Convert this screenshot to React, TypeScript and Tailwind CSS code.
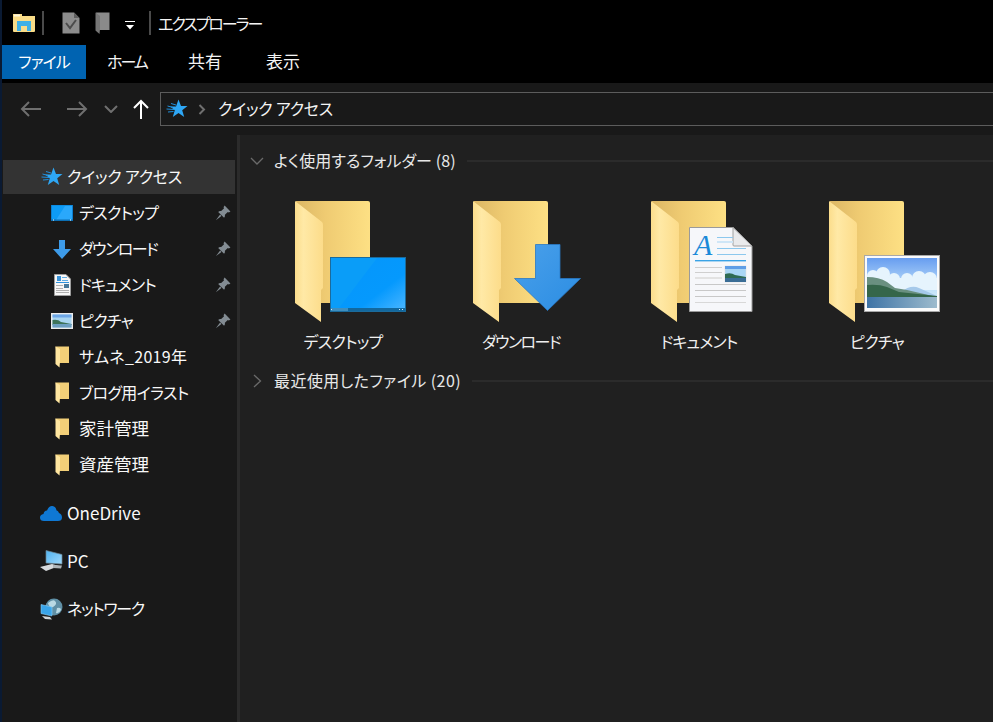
import React from 'react';

const jp = "font-['Noto_Sans_CJK_JP','Noto_Sans',sans-serif] [font-feature-settings:'palt']";

// kana in the original font run narrower than Noto, so each label gets its own fit
const fit: Record<string, string> = {
  デスクトップ: 'tracking-[-0.7px]',
  ダウンロード: 'tracking-[-1.5px]',
  ドキュメント: 'tracking-[-0.8px]',
  ピクチャ: 'tracking-[-0.7px]',
  'サムネ_2019年': 'tracking-[0.3px]',
  ブログ用イラスト: 'tracking-[-0.6px]',
  家計管理: 'text-[17.5px]',
  資産管理: 'text-[17.5px]',
};

function Defs() {
  return (
    <svg className="w-0 h-0 shrink-0" aria-hidden="true">
      <defs>
        <linearGradient id="folderBack" x1="0" y1="0" x2="1" y2="0">
          <stop offset="0" stopColor="#dcb765" />
          <stop offset="0.4" stopColor="#efcb72" />
          <stop offset="1" stopColor="#fde084" />
        </linearGradient>
        <linearGradient id="folderFront" x1="0" y1="0" x2="1" y2="0">
          <stop offset="0" stopColor="#fbdd8c" />
          <stop offset="0.3" stopColor="#ffe9a6" />
          <stop offset="1" stopColor="#fcdc8a" />
        </linearGradient>
        <linearGradient id="arrowBlue" x1="0" y1="0" x2="1" y2="1">
          <stop offset="0" stopColor="#4aa0ea" />
          <stop offset="1" stopColor="#2b8de3" />
        </linearGradient>
        <linearGradient id="sky" x1="0" y1="0" x2="0" y2="1">
          <stop offset="0" stopColor="#679df0" />
          <stop offset="0.6" stopColor="#bfe0fa" />
          <stop offset="1" stopColor="#e6f5fb" />
        </linearGradient>
        <linearGradient id="water" x1="0" y1="0" x2="1" y2="0">
          <stop offset="0" stopColor="#3f74a6" />
          <stop offset="1" stopColor="#9dbbcd" />
        </linearGradient>
        <linearGradient id="screen" x1="0" y1="0" x2="1" y2="1">
          <stop offset="0" stopColor="#0596fb" />
          <stop offset="0.65" stopColor="#0599fd" />
          <stop offset="1" stopColor="#46b4ff" />
        </linearGradient>
        <linearGradient id="pcScreen" x1="0" y1="0" x2="1" y2="1">
          <stop offset="0" stopColor="#4fb2f0" />
          <stop offset="1" stopColor="#9fd8fb" />
        </linearGradient>
      </defs>
    </svg>
  );
}

function BigFolder() {
  return (
    <>
      <path d="M1 1H73Q75 1 75 3V103H20L1 40Z" fill="url(#folderBack)" />
      <path d="M0 1L27 22Q28 23 28 25V88L26 90V122L0 103Z" fill="url(#folderFront)" />
    </>
  );
}

function DesktopOverlay() {
  return (
    <g>
      <rect x="35.5" y="57.5" width="75" height="54" fill="#0a9df8" stroke="#1b6b9c" />
      <path d="M44 108L82 58H110V108Z" fill="url(#screen)" />
      <rect x="36" y="108" width="74" height="3" fill="#12689e" />
      <rect x="36" y="108" width="17" height="3" fill="#3f8fbf" />
      <rect x="104" y="109" width="1" height="1" fill="#d5eefb" />
      <rect x="107" y="109" width="1" height="1" fill="#d5eefb" />
      <rect x="36" y="109" width="1" height="1" fill="#d5eefb" />
    </g>
  );
}

function DownloadOverlay() {
  return <path d="M62.5 44.5H87V78.5H107.5L74.5 110.5L41.5 78.5H62.5Z" fill="url(#arrowBlue)" stroke="#2a79c4" strokeWidth="0.8" />;
}

function DocumentOverlay() {
  return (
    <g>
      <path d="M38.5 27.5H82L101 46V111.5H38.5Z" fill="#f6f7fa" stroke="#9a9a9a" />
      <path d="M82 27.5V45Q82 46 83 46H101Z" fill="#e9eaec" stroke="#a0a0a0" />
      <text x="43" y="55" fontFamily="Liberation Serif" fontStyle="italic" fontSize="30" fill="#1b8ad8">A</text>
      <rect x="66" y="37" width="16" height="1" fill="#8cc8ee" />
      <rect x="66" y="41" width="16" height="2" fill="#cfe6f7" />
      <rect x="66" y="48" width="29" height="1" fill="#8cc8ee" />
      <rect x="66" y="54" width="29" height="1" fill="#8cc8ee" />
      <rect x="44" y="60" width="51" height="1.4" fill="#3aa3e6" />
      <rect x="44" y="67" width="27" height="1" fill="#cfcfcf" />
      <rect x="44" y="72" width="27" height="1" fill="#cfcfcf" />
      <rect x="44" y="77" width="27" height="2" fill="#e2e2e2" />
      <rect x="44" y="84" width="51" height="1" fill="#c8c8c8" />
      <rect x="44" y="90" width="51" height="1" fill="#c8c8c8" />
      <rect x="44" y="96" width="51" height="1" fill="#c8c8c8" />
      <rect x="44" y="102" width="51" height="1" fill="#d8d8d8" />
      <rect x="74" y="66" width="21" height="16" fill="#a9d6f5" stroke="#dcdcdc" strokeWidth="0.5" />
      <rect x="74" y="66" width="21" height="3" fill="#5f9ee6" />
      <path d="M74 74Q80 72 84 75L95 77V78H74Z" fill="#2f6b53" />
      <rect x="74" y="78" width="21" height="4" fill="#3a6d96" />
    </g>
  );
}

function PictureOverlay() {
  return (
    <g>
      <rect x="35.5" y="55.5" width="75" height="56" fill="#fafafa" stroke="#a8a8a8" />
      <rect x="38" y="58" width="70" height="50" fill="url(#sky)" />
      <g fill="#e6f4fd">
        <circle cx="44" cy="76" r="6" />
        <circle cx="54" cy="74" r="7" />
        <circle cx="65" cy="79" r="6" />
        <circle cx="78" cy="79" r="6" />
        <circle cx="90" cy="78" r="7" />
        <circle cx="101" cy="79" r="7" />
        <rect x="38" y="78" width="70" height="12" />
      </g>
      <path d="M72 92Q82 84 90 88L108 96H70Z" fill="#a5c9ea" />
      <path d="M38 77Q50 77 58 82L66 88L78 90L108 97H38Z" fill="#6a9080" />
      <path d="M38 85Q50 84 58 87L70 92L108 96V98H38Z" fill="#35664a" />
      <rect x="38" y="97" width="70" height="11" fill="url(#water)" />
    </g>
  );
}

const tiles = [
  { name: 'デスクトップ', overlay: <DesktopOverlay /> },
  { name: 'ダウンロード', overlay: <DownloadOverlay /> },
  { name: 'ドキュメント', overlay: <DocumentOverlay /> },
  { name: 'ピクチャ', overlay: <PictureOverlay /> },
];

function StarIcon({ size = 22 }: { size?: number }) {
  return (
    <svg width={size} height={size} viewBox="0 0 22 22">
      <path d="M12.5 1.5L15 8H21.5L16.2 12.2L18.2 19L12.5 15L6.8 19L8.8 12.2L4 8.4H10Z" fill="#2ea7f5" />
      <path d="M5 5.5L10 7M1.5 8L7 9.5M0.5 11L8 11.5M2 14L7.5 13.5" stroke="#1f8fdc" strokeWidth="1" />
    </svg>
  );
}

function SmallFolder() {
  return (
    <svg width="14" height="22" viewBox="0 0 14 22">
      <path d="M0.5 0.5H14V17H3Z" fill="#f2cf78" />
      <path d="M0.5 0.5L5 3V15.5L4.5 21.5L0.5 18Z" fill="#ffe6a0" />
    </svg>
  );
}

function SmallDesktop() {
  return (
    <svg width="22" height="16" viewBox="0 0 22 16">
      <rect width="22" height="16" fill="#0c7fd1" />
      <rect x="1" y="0.5" width="20" height="14" fill="#0d9bf6" />
      <path d="M5 15L14 1H21V15Z" fill="#2aa8fb" />
      <rect x="0" y="14.5" width="22" height="1.5" fill="#0b6fb4" />
      <rect x="2" y="14.5" width="1" height="1" fill="#fff" />
      <rect x="19" y="14.5" width="1" height="1" fill="#fff" />
    </svg>
  );
}

function SmallDownload() {
  return (
    <svg width="18" height="19" viewBox="0 0 18 19">
      <path d="M6 0H12V9H18L9 19L0 9H6Z" fill="#3d9be9" />
    </svg>
  );
}

function SmallDoc() {
  return (
    <svg width="17" height="22" viewBox="0 0 17 22">
      <path d="M0.5 0.5H12L16.5 5V21.5H0.5Z" fill="#f7f7f7" stroke="#9d9d9d" />
      <rect x="3" y="2" width="4" height="5" fill="#3a93d8" />
      <rect x="8" y="3" width="5" height="1" fill="#60aee6" />
      <rect x="8" y="6" width="6" height="1" fill="#60aee6" />
      <rect x="2" y="8" width="13" height="1" fill="#2f93dd" />
      <rect x="2" y="11" width="7" height="1" fill="#b0b0b0" />
      <rect x="10" y="10" width="5" height="4" fill="#46789a" />
      <rect x="2" y="14" width="7" height="1" fill="#b0b0b0" />
      <rect x="2" y="16" width="13" height="1" fill="#b0b0b0" />
      <rect x="2" y="18" width="13" height="1" fill="#b0b0b0" />
    </svg>
  );
}

function SmallPicture() {
  return (
    <svg width="22" height="16" viewBox="0 0 22 16">
      <rect width="22" height="16" fill="#ececec" />
      <rect x="1.5" y="1.5" width="19" height="13" fill="#a9d5f0" />
      <rect x="1.5" y="1.5" width="19" height="3" fill="#6da6e6" />
      <path d="M1.5 7Q7 6 10 9L20.5 11V12H1.5Z" fill="#3d7359" />
      <rect x="1.5" y="11" width="19" height="3.5" fill="#6c9ec0" />
    </svg>
  );
}

function Pin() {
  return (
    <svg width="16" height="16" viewBox="0 0 15 15">
      <path d="M9 0.5L14.5 6L13 7L12 6.5L9.3 9.2Q9.6 11 8.5 12L3 6.5Q4 5.4 5.8 5.7L8.5 3L8 2Z" fill="#838c93" />
      <path d="M4.8 9L0.8 14.2L6 10.2Z" fill="#838c93" />
    </svg>
  );
}

function Cloud() {
  return (
    <svg width="22" height="16" viewBox="0 0 22 16">
      <path d="M4 16Q0 16 0 12.5Q0 9.5 3.5 9Q4 5.5 7 5.5Q9 0.5 12.5 1Q16 1.5 16.5 5.5Q18 5 19 8Q22 9 22 12.5Q22 16 18 16Z" fill="#0f78d4" />
    </svg>
  );
}

function PcIcon() {
  return (
    <svg width="24" height="22" viewBox="0 0 24 22">
      <path d="M7 0.5L23 4.5V14L7 13Z" fill="url(#pcScreen)" stroke="#6d8592" strokeWidth="0.7" />
      <path d="M1 17L13 14L20 16L7 21Z" fill="#d6d9dc" />
      <path d="M14 15L23 15.5L22 18.5L14 18Z" fill="#aeb4b8" />
    </svg>
  );
}

function NetIcon() {
  return (
    <svg width="23" height="22" viewBox="0 0 23 22">
      <circle cx="14" cy="9" r="8.5" fill="#5f8fa5" />
      <path d="M8 5Q13 1 15 3Q18 6 13 9Q9 10 8 5ZM17 10Q21 9 21 12Q19 16 16 15Z" fill="#b9d9e4" />
      <path d="M1 6.5L12 9V18L1 15.5Z" fill="#3aa5ea" stroke="#8fd0f5" strokeWidth="0.6" />
      <path d="M2 18L10 19L12 21.5L5 21Z" fill="#cfd4d7" />
    </svg>
  );
}

type Row = { label: string; icon: React.ReactNode; pinned?: boolean };

const pinnedRows: Row[] = [
  { label: 'デスクトップ', icon: <SmallDesktop />, pinned: true },
  { label: 'ダウンロード', icon: <SmallDownload />, pinned: true },
  { label: 'ドキュメント', icon: <SmallDoc />, pinned: true },
  { label: 'ピクチャ', icon: <SmallPicture />, pinned: true },
  { label: 'サムネ_2019年', icon: <SmallFolder /> },
  { label: 'ブログ用イラスト', icon: <SmallFolder /> },
  { label: '家計管理', icon: <SmallFolder /> },
  { label: '資産管理', icon: <SmallFolder /> },
];

function TitleBar() {
  return (
    <div className="h-[45px] flex items-center pl-[11px] text-[#f4f4f4]">
      <svg width="22" height="20" viewBox="0 0 22 20" className="mb-[-1px]">
        <path d="M0 1H9V3H22V18Q22 19 21 19H1Q0 19 0 18Z" fill="#f9dc88" />
        <rect x="1" y="1.5" width="6" height="2" fill="#fdf6dc" />
        <path d="M4 8H18V18H14V13H8V18H4Z" fill="#3eb0e6" />
      </svg>
      <div className="w-[2px] h-[24px] bg-[#4a4a4a] ml-[7px]" />
      <svg width="18" height="22" viewBox="0 0 18 22" className="ml-[18px]">
        <path d="M0.5 0.5H12L17.5 6V21.5H0.5Z" fill="#8c8c8c" />
        <path d="M12 0.5V6H17.5Z" fill="#5e5e5e" />
        <path d="M4 11L8 16L14 8" stroke="#4b4b4b" strokeWidth="2" fill="none" />
      </svg>
      <svg width="15" height="22" viewBox="0 0 15 22" className="ml-[15px]">
        <path d="M1 0.5H14.5V18H4Z" fill="#8a8a8a" />
        <path d="M0.5 0.5L5 4V17L4.5 22L0.5 18.5Z" fill="#767676" />
      </svg>
      <svg width="10" height="9" viewBox="0 0 10 9" className="ml-[15px] mt-[5px]">
        <rect width="10" height="1" fill="#fff" />
        <path d="M1 4H9L5 8.5Z" fill="#fff" />
      </svg>
      <div className="w-[2px] h-[24px] bg-[#4a4a4a] ml-[14px]" />
      <span className="ml-[7px] text-[16px] leading-none tracking-[-2px]">エクスプローラー</span>
    </div>
  );
}

function Tabs() {
  return (
    <div className="h-[38px] flex items-start text-[16px] text-[#f4f4f4]">
      <div className="w-[84px] h-[34px] pb-[2px] bg-[#0063b1] flex items-center justify-center text-white tracking-[-1px]">ファイル</div>
      <div className="w-[82px] h-[34px] pb-[2px] flex items-center justify-center tracking-[-2px]">ホーム</div>
      <div className="w-[74px] h-[34px] pb-[2px] flex items-center justify-center text-[17px]">共有</div>
      <div className="w-[82px] h-[34px] pb-[2px] flex items-center justify-center text-[17px]">表示</div>
    </div>
  );
}

function NavBar() {
  return (
    <div className="h-[52px] bg-[#191919] flex items-start pt-[9px]">
      <div className="h-[34px] flex items-center pl-[18px]">
        <svg width="22" height="16" viewBox="0 0 22 16">
          <path d="M21 8H2M9 1L2 8L9 15" stroke="#6f6f6f" strokeWidth="2" fill="none" />
        </svg>
        <svg width="22" height="16" viewBox="0 0 22 16" className="ml-[24px]">
          <path d="M1 8H20M13 1L20 8L13 15" stroke="#6f6f6f" strokeWidth="2" fill="none" />
        </svg>
        <svg width="14" height="8" viewBox="0 0 14 8" className="ml-[16px]">
          <path d="M1 1L7 7L13 1" stroke="#6f6f6f" strokeWidth="2" fill="none" />
        </svg>
        <svg width="16" height="20" viewBox="0 0 16 20" className="ml-[15px]">
          <path d="M8 20V2M1 9L8 2L15 9" stroke="#ffffff" strokeWidth="2" fill="none" />
        </svg>
      </div>
      <div className="ml-[11px] flex-1 h-[34px] border-y border-l border-[#5c5c5c] flex items-center pl-[5px] text-[#f4f4f4] text-[16px]">
        <StarIcon />
        <svg width="8" height="11" viewBox="0 0 8 11" className="ml-[10px]">
          <path d="M1.5 1L6 5.5L1.5 10" stroke="#6f6f6f" strokeWidth="2" fill="none" />
        </svg>
        <span className="ml-[12px] pb-[2px] tracking-[-0.25px]">クイック アクセス</span>
      </div>
    </div>
  );
}

function Sidebar() {
  return (
    <div className="w-[235px] shrink-0 bg-[#191919] pt-[24px] pl-[1px] pr-[2px] text-[16px] text-[#f8f8f8]">
      <div className="h-[36px] py-px">
        <div className="h-[34px] bg-[#333333] flex items-center pl-[38px]">
          <StarIcon />
          <span className="ml-[4px] pb-[2px] tracking-[-0.25px]">クイック アクセス</span>
        </div>
      </div>
      {pinnedRows.map((row) => (
        <div key={row.label} className="h-[36px] flex items-center">
          <div className="w-[76px] shrink-0 flex justify-center pl-[42px]">{row.icon}</div>
          <span className={`flex-1 pb-[2px] ${fit[row.label] ?? ''}`}>{row.label}</span>
          {row.pinned && (
            <div className="mr-[4px]">
              <Pin />
            </div>
          )}
        </div>
      ))}
      <div className="h-[36px] mt-[12px] flex items-center pl-[37px]">
        <Cloud />
        <span className="ml-[5px] text-[17px]">OneDrive</span>
      </div>
      <div className="h-[36px] mt-[12px] flex items-center pl-[36px]">
        <PcIcon />
        <span className="ml-[4px] text-[17px]">PC</span>
      </div>
      <div className="h-[36px] mt-[12px] flex items-center pl-[37px]">
        <NetIcon />
        <span className="ml-[4px] pb-[2px] tracking-[-1.3px]">ネットワーク</span>
      </div>
    </div>
  );
}

function GroupHeader({ label, open }: { label: string; open?: boolean }) {
  return (
    <div className="h-[24px] flex items-center text-[16px] text-[#e8e8e8]">
      <div className="w-[34px] shrink-0 flex justify-center">
        {open ? (
          <svg width="14" height="9" viewBox="0 0 14 9">
            <path d="M1 1L7 7L13 1" stroke="#6a6a6a" strokeWidth="1.3" fill="none" />
          </svg>
        ) : (
          <svg width="9" height="14" viewBox="0 0 9 14">
            <path d="M1 1L7.5 7L1 13" stroke="#6a6a6a" strokeWidth="1.3" fill="none" />
          </svg>
        )}
      </div>
      <span className={`whitespace-nowrap pb-[2px] ${open ? 'tracking-[0.1px]' : 'tracking-[0.45px]'}`}>{label}</span>
      <div className="flex-1 h-[2px] bg-[#2b2b2b] ml-[11px]" />
    </div>
  );
}

function Content() {
  return (
    <div className="flex-1 bg-[#202020] pt-[14px] min-w-0">
      <GroupHeader label="よく使用するフォルダー (8)" open />
      <div className="flex pl-[14px] pt-[27px] h-[196px]">
        {tiles.map((tile) => (
          <div key={tile.name} className="w-[178px] shrink-0 flex flex-col">
            <svg width="115" height="123" viewBox="0 0 115 123" className="ml-[41px]">
              <BigFolder />
              {tile.overlay}
            </svg>
            <div className={`text-center text-[16px] text-[#f0f0f0] mt-[6px] ${fit[tile.name]}`}>{tile.name}</div>
          </div>
        ))}
      </div>
      <GroupHeader label="最近使用したファイル (20)" />
    </div>
  );
}

export default function App() {
  return (
    <div className={`w-[993px] h-[722px] overflow-hidden bg-black border-l-2 border-[#0a1a33] flex flex-col ${jp}`}>
      <Defs />
      <TitleBar />
      <Tabs />
      <NavBar />
      <div className="flex-1 flex min-h-0">
        <Sidebar />
        <div className="w-[3px] shrink-0 bg-[#2b2b2b]" />
        <Content />
      </div>
    </div>
  );
}
